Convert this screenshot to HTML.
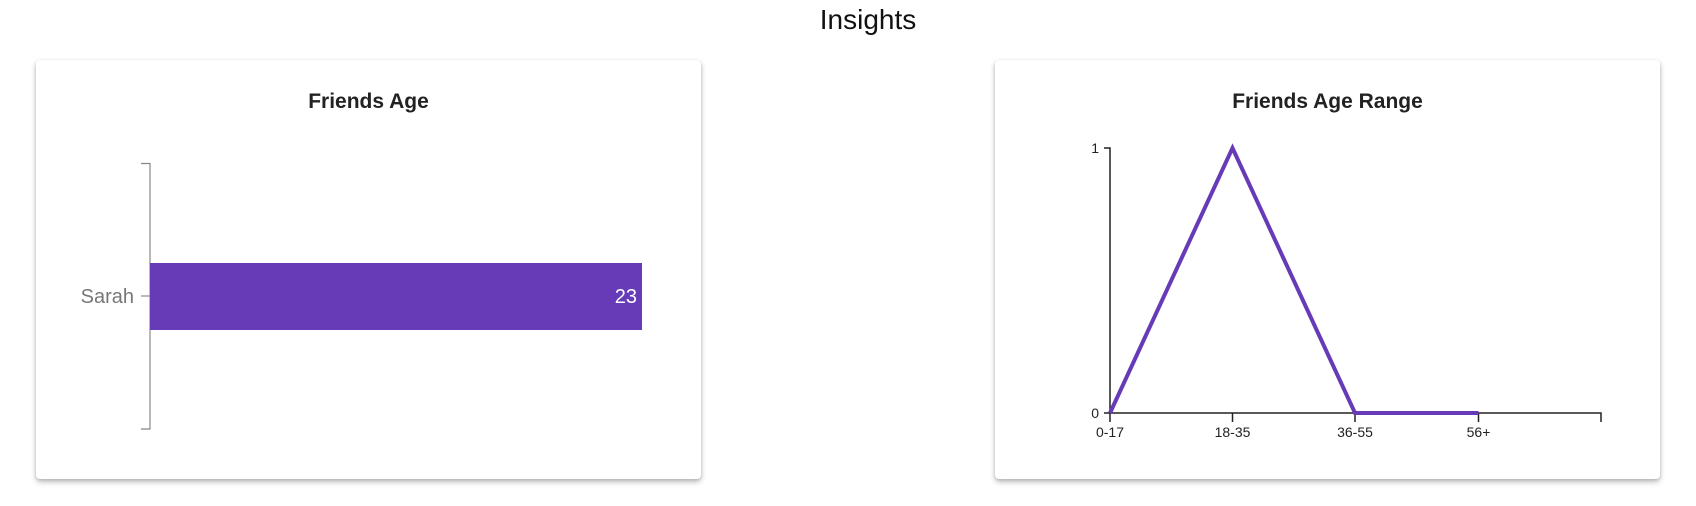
<!DOCTYPE html>
<html><head><style>
body{margin:0;width:1696px;height:506px;background:#fff;font-family:"Liberation Sans",sans-serif;position:relative;overflow:hidden}
.t{position:absolute;left:768px;width:200px;text-align:center;top:4px;font-size:28px;color:#111}
.card{position:absolute;top:60px;width:665px;height:419px;background:#fff;border-radius:4px;box-shadow:0 3px 6px rgba(0,0,0,.25),0 1px 3px rgba(0,0,0,.12)}
.ct{position:absolute;top:90px;width:665px;text-align:center;font-size:21px;font-weight:bold;color:#222}
svg{position:absolute;left:0;top:0}
</style></head><body>
<div class="t">Insights</div>
<div class="card" style="left:36px"></div>
<div class="card" style="left:995px"></div>
<div class="ct" style="left:36px">Friends Age</div>
<div class="ct" style="left:995px">Friends Age Range</div>
<svg width="1696" height="506" font-family="Liberation Sans, sans-serif">
<path d="M141 163.5H150V429H141" fill="none" stroke="#888" stroke-width="1.2"/>
<line x1="141" y1="296" x2="150" y2="296" stroke="#888" stroke-width="1.2"/>
<rect x="150" y="263" width="492" height="67" fill="#673ab7"/>
<text x="134" y="303" text-anchor="end" font-size="20" fill="#777">Sarah</text>
<text x="637" y="303" text-anchor="end" font-size="20" fill="#fff">23</text>
<path d="M1104 148H1110V413H1601V422" fill="none" stroke="#222" stroke-width="1.5"/>
<line x1="1104" y1="413" x2="1110" y2="413" stroke="#222" stroke-width="1.5"/>
<path d="M1110 413V422M1232.5 413V422M1355 413V422M1478.5 413V422" stroke="#222" stroke-width="1.5"/>
<polyline points="1110,413 1232.5,148 1355,413 1478.5,413" fill="none" stroke="#673ab7" stroke-width="4"/>
<g font-size="14" fill="#222" text-anchor="middle">
<text x="1110" y="437">0-17</text><text x="1232.5" y="437">18-35</text><text x="1355" y="437">36-55</text><text x="1478.5" y="437">56+</text>
</g>
<g font-size="14" fill="#222" text-anchor="end"><text x="1099" y="153">1</text><text x="1099" y="418">0</text></g>
</svg>
</body></html>
